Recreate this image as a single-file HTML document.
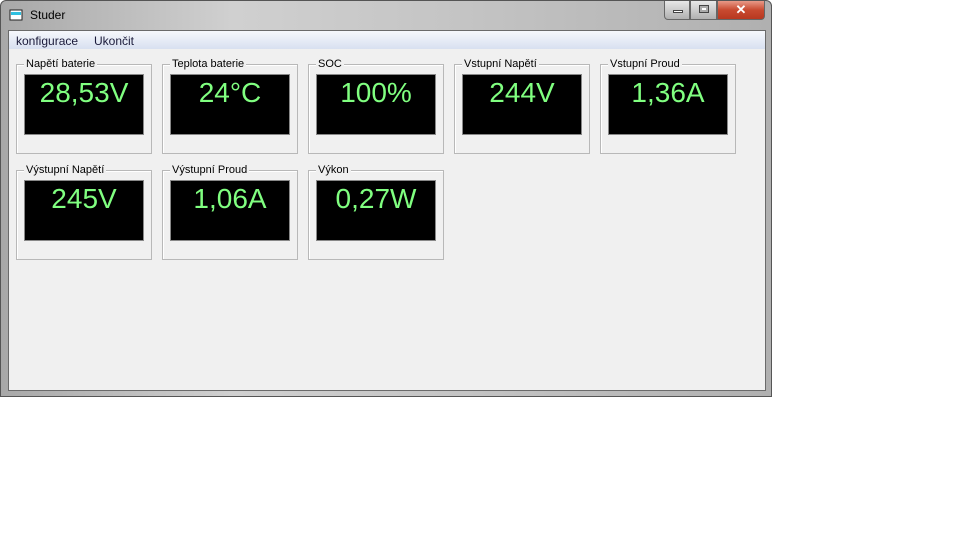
<!DOCTYPE html>
<html><head><meta charset="utf-8"><style>
*{margin:0;padding:0;box-sizing:border-box}
body{width:977px;height:538px;background:#fff;position:relative;overflow:hidden;font-family:"Liberation Sans",sans-serif}
#win{position:absolute;left:0;top:0;width:772px;height:397px;background:linear-gradient(90deg,#a8a8a8,#d0d0d0 30%,#c4c4c4 60%,#b0b0b0);border:1px solid #555;border-radius:6px 6px 0 0}
#title{position:absolute;left:29px;top:7px;font-size:12px;color:#000}
#client{position:absolute;left:7px;top:29px;width:758px;height:361px;background:#f0f0f0;border:1px solid #6a6a6a}
#menu{position:absolute;left:0;top:0;width:756px;height:18px;background:linear-gradient(#f6f8fc,#d8e0f0);font-size:12px;color:#1a1a3a}
#menu span{position:absolute;top:3px}
.gb{position:absolute;width:136px;height:90px;border:1px solid #b8b8b8;box-shadow:inset 1px 1px 0 #fff}
.gb .lb{position:absolute;left:7px;top:-7px;background:#f0f0f0;font-size:11px;padding:0 2px;color:#000;line-height:12px}
.gb .d{position:absolute;left:7px;top:9px;width:120px;height:61px;background:#000;border:1px solid #888;color:#80ff80;font-size:28px;text-align:center;line-height:32px;padding-top:2px}
.btn{position:absolute;top:0;height:19px;border:1px solid #666;border-top:none}
</style></head><body>
<div id="win">
<svg style="position:absolute;left:8px;top:7px" width="14" height="14"><rect x="1" y="2" width="12" height="10" fill="#fff" stroke="#222"/><rect x="2" y="4" width="10" height="3" fill="#30c0e0"/></svg>
<div id="title">Studer</div>
<div class="btn" style="left:663px;width:26px;background:linear-gradient(#e8e8e8,#b0b0b0);border-radius:0 0 0 4px"><div style="position:absolute;left:8px;top:9px;width:10px;height:3px;background:#fff;border:1px solid #444"></div></div>
<div class="btn" style="left:689px;width:27px;background:linear-gradient(#e8e8e8,#b0b0b0)"><div style="position:absolute;left:8px;top:4px;width:10px;height:8px;border:1px solid #444;background:#fff;box-shadow:inset 0 0 0 2px #aaa"></div></div>
<div class="btn" style="left:716px;width:48px;background:linear-gradient(#e89a88,#c84a30 50%,#b83820);border-radius:0 0 4px 0;color:#fff;font-weight:bold;font-size:13px;text-align:center;line-height:17px">✕</div>
<div id="client">
<div id="menu"><span style="left:7px">konfigurace</span><span style="left:85px">Ukončit</span></div>
</div>
</div>
<div class="gb" style="left:16px;top:64px"><span class="lb">Napětí baterie</span><div class="d">28,53V</div></div>
<div class="gb" style="left:162px;top:64px"><span class="lb">Teplota baterie</span><div class="d">24°C</div></div>
<div class="gb" style="left:308px;top:64px"><span class="lb">SOC</span><div class="d">100%</div></div>
<div class="gb" style="left:454px;top:64px"><span class="lb">Vstupní Napětí</span><div class="d">244V</div></div>
<div class="gb" style="left:600px;top:64px"><span class="lb">Vstupní Proud</span><div class="d">1,36A</div></div>
<div class="gb" style="left:16px;top:170px"><span class="lb">Výstupní Napětí</span><div class="d">245V</div></div>
<div class="gb" style="left:162px;top:170px"><span class="lb">Výstupní Proud</span><div class="d">1,06A</div></div>
<div class="gb" style="left:308px;top:170px"><span class="lb">Výkon</span><div class="d">0,27W</div></div>
</body></html>
